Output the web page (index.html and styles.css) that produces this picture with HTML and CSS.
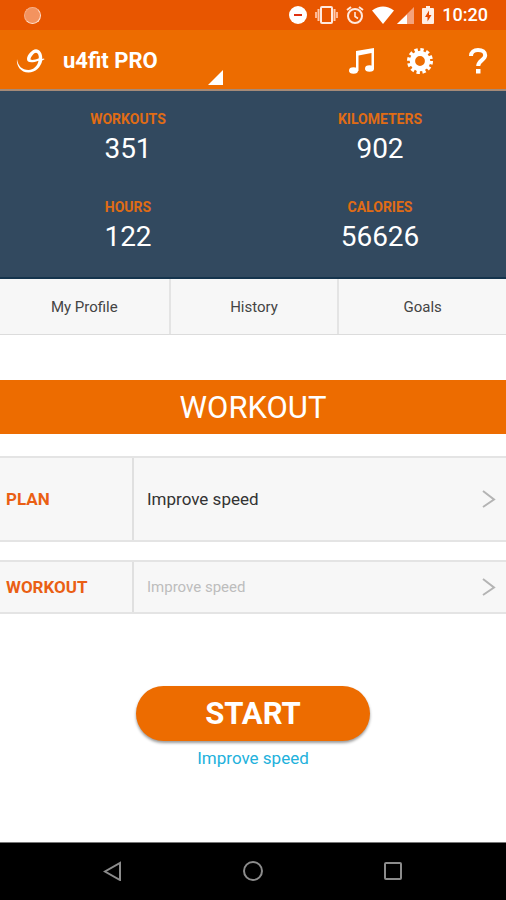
FILE: index.html
```html
<!DOCTYPE html>
<html lang="en">
<head>
<meta charset="utf-8">
<meta name="viewport" content="width=device-width, initial-scale=1">
<title>u4fit PRO</title>
<link rel="stylesheet" href="styles.css">
</head>
<body>
<div class="status">
  <span class="status-dot"></span>
  <div class="status-icons">
    <svg width="18" height="18" viewBox="0 0 18 18"><circle cx="9" cy="9" r="9" fill="#fff"/><path d="M5 9h8" stroke="#e03010" stroke-width="2"/></svg>
    <svg width="23" height="18" viewBox="0 0 23 18"><rect x="6" y="1" width="11" height="16" rx="1" fill="none" stroke="#ffe9df" stroke-width="2"/><path d="M3.500 3v12M19.500 3v12" stroke="#ffc9ae" stroke-width="2"/><path d="M1 6v6M22 6v6" stroke="#ffb794" stroke-width="2"/></svg>
    <svg width="18" height="18" viewBox="0 0 18 18"><g fill="none" stroke="#ffe9df" stroke-width="2"><circle cx="9" cy="10" r="7"/><path d="M9 6v4.500l3 2" stroke-width="1.600"/><path d="M1 4l4-3M17 4l-4-3"/></g></svg>
    <div class="signal">
      <svg width="22" height="18" viewBox="0 0 22 18"><path d="M0 4.500Q11-3.500 22 4.500L11 18z" fill="#fff"/></svg>
      <svg width="17" height="18" viewBox="0 0 17 18"><path d="M17 1v17H0z" fill="#f4a27c"/><path d="M10 8.500V18H0z" fill="#fff"/></svg>
    </div>
    <svg width="12" height="18" viewBox="0 0 12 18"><path d="M4 0h4v2h3q1 0 1 1v14q0 1-1 1H1q-1 0-1-1V3q0-1 1-1h3z" fill="#ffeee6"/><path d="M7 4.500L3 11h2.500v4.500L9.500 9H7z" fill="#e64a00"/></svg>
    <span class="clock">10:20</span>
  </div>
</div>

<header class="appbar">
  <svg class="logo" width="29" height="26" viewBox="0 0 29 26"><path d="M1 11C0 18 5 24.500 12.500 24.500 19.500 24.500 25 19 26.200 12.500L28.500 11.200 28 10.500 26.300 11C26.500 5 23.500 1.200 20 1.200 16 1.500 11 7 11 11 11 14.500 15 15.500 22.500 12.800 21.500 18 17.500 22 12.500 22 6 22 2 18 1 11zM14.500 11C15 8.500 18 4.800 20 4.800 22 5 23 7.500 22.800 10.300 19 12 14.500 12.500 14.500 11z" fill="#fff" fill-rule="evenodd"/></svg>
  <button class="switcher" type="button">u4fit PRO</button>
  <nav class="tools">
    <button type="button" aria-label="Music"><svg width="28" height="28" viewBox="0 0 28 28"><path d="M8 4L26 1V22h-2.500V6L10.500 8.500V24H8z" fill="#fff"/><ellipse cx="5.500" cy="23.500" rx="4.500" ry="3.300" fill="#fff"/><ellipse cx="21.500" cy="21.500" rx="4.500" ry="3.300" fill="#fff"/></svg></button>
    <button type="button" aria-label="Settings"><svg width="28" height="28" viewBox="0 0 28 28"><circle cx="14" cy="14" r="7.600" fill="none" stroke="#fff" stroke-width="5.400"/><circle cx="14" cy="14" r="11.200" fill="none" stroke="#fff" stroke-width="3.600" stroke-dasharray="3.320 2.544"/></svg></button>
    <button type="button" aria-label="Help"><svg width="28" height="28" viewBox="0 0 28 28"><path d="M7 9C7 5 10 3 14 3c4.500 0 7.200 2 7.200 5.300 0 4.700-7 5-7 10.700" fill="none" stroke="#fff" stroke-width="4"/><path d="M12 22h4.500v4.500H12z" fill="#fff"/></svg></button>
  </nav>
</header>

<main>
  <dl class="stats">
    <div><dt>WORKOUTS</dt><dd>351</dd></div>
    <div><dt>KILOMETERS</dt><dd>902</dd></div>
    <div><dt>HOURS</dt><dd>122</dd></div>
    <div><dt>CALORIES</dt><dd>56626</dd></div>
  </dl>
  <nav class="tabs">
    <a href="#profile">My Profile</a>
    <a href="#history">History</a>
    <a href="#goals">Goals</a>
  </nav>
  <h1 class="banner">WORKOUT</h1>
  <button class="row row-tall" type="button">
    <span class="row-label">PLAN</span>
    <span class="row-value">Improve speed</span>
    <svg class="chevron" width="14" height="20" viewBox="0 0 14 20"><path d="M1 2l11 8.500L1 18" fill="none" stroke="#b4b4b4" stroke-width="2"/></svg>
  </button>
  <button class="row row-dim" type="button">
    <span class="row-label">WORKOUT</span>
    <span class="row-value">Improve speed</span>
    <svg class="chevron" width="14" height="20" viewBox="0 0 14 20"><path d="M1 2l11 8.500L1 18" fill="none" stroke="#b4b4b4" stroke-width="2"/></svg>
  </button>
  <div class="start">
    <button class="start-button" type="button">START</button>
    <p>Improve speed</p>
  </div>
</main>

<nav class="system">
  <button type="button" aria-label="Back"><svg width="20" height="20" viewBox="0 0 20 20"><path d="M17 2v17L2 10.500z"/></svg></button>
  <button type="button" aria-label="Home"><svg width="20" height="20" viewBox="0 0 20 20"><circle cx="10" cy="10" r="9"/></svg></button>
  <button type="button" aria-label="Recent apps"><svg width="20" height="20" viewBox="0 0 20 20"><rect x="2" y="2" width="16" height="16" rx="1"/></svg></button>
</nav>
</body>
</html>
```
FILE: styles.css
```css
* {
  box-sizing: border-box;
}

body {
  margin: 0;
  min-height: 100vh;
  display: flex;
  flex-direction: column;
  background: #fff;
  color: #333;
  font-family: Roboto, "Liberation Sans", sans-serif;
}

button {
  border: 0;
  padding: 0;
  background: none;
  color: inherit;
  font: inherit;
  cursor: pointer;
}

svg {
  display: block;
}

.status {
  display: flex;
  align-items: center;
  justify-content: space-between;
  height: 30px;
  padding: 0 18px 0 24px;
  background: #e85600;
  color: #fff;
}

.status-dot {
  width: 17px;
  height: 17px;
  border-radius: 50%;
  background: #f3935f;
  border: 1px solid #f6ae88;
  border-right-color: #ffe0cf;
  border-bottom-color: #ffe0cf;
}

.status-icons {
  display: flex;
  align-items: center;
  gap: 8px;
}

.signal {
  display: flex;
  gap: 3px;
}

.clock {
  font-size: 18px;
  font-weight: 500;
  line-height: 20px;
}

.appbar {
  display: flex;
  align-items: center;
  height: 61px;
  padding: 2px 14px 0 16px;
  background: #ed6c00;
  border-bottom: 2px solid #a58a78;
  color: #fff;
}

.switcher {
  position: relative;
  width: 160px;
  height: 48px;
  margin-left: 18px;
  text-align: left;
  font-size: 22px;
  font-weight: 700;
}

.switcher::after {
  content: "";
  position: absolute;
  right: 0;
  bottom: 0;
  border-left: 15px solid transparent;
  border-bottom: 15px solid #fff;
}

.tools {
  display: flex;
  gap: 30px;
  margin-left: auto;
}

.stats {
  display: grid;
  grid-template-columns: 1fr 1fr;
  gap: 32px 0;
  margin: 0;
  padding: 20px 0 22px 2px;
  background: #32495f;
  border-bottom: 2px solid #15344d;
  text-align: center;
}

.stats dt {
  color: #e06c14;
  font-size: 14px;
  font-weight: 700;
  line-height: 16px;
}

.stats dd {
  margin: 4px 0 0;
  color: #fff;
  font-size: 28px;
  line-height: 36px;
}

.tabs {
  display: grid;
  grid-template-columns: repeat(3, 1fr);
  background: #f7f7f7;
  border-bottom: 1px solid #dcdcdc;
}

.tabs a {
  padding-top: 1px;
  color: #444;
  font-size: 15px;
  line-height: 54px;
  text-align: center;
  text-decoration: none;
}

.tabs a + a {
  border-left: 2px solid #e4e4e4;
}

.banner {
  margin: 45px 0 22px;
  padding-top: 1px;
  background: #ed6c00;
  color: #fff;
  font-size: 31px;
  font-weight: 400;
  line-height: 53px;
  text-align: center;
}

.row {
  display: flex;
  align-items: center;
  width: 100%;
  height: 54px;
  margin-bottom: 18px;
  padding-right: 10px;
  background: #f7f7f7;
  border: solid #e4e4e4;
  border-width: 2px 0;
  text-align: left;
}

.row-tall {
  height: 86px;
}

.row-label {
  display: flex;
  align-items: center;
  align-self: stretch;
  width: 134px;
  padding-left: 6px;
  border-right: 2px solid #e0e0e0;
  color: #ea5f14;
  font-size: 17px;
  font-weight: 700;
}

.row-value {
  flex: 1;
  padding-left: 13px;
  font-size: 17px;
}

.row-dim .row-value {
  color: #bdbdbd;
  font-size: 15px;
}

.start {
  display: flex;
  flex-direction: column;
  align-items: center;
  padding: 54px 0 24px;
}

.start-button {
  width: 234px;
  height: 55px;
  border-radius: 28px;
  background: #ed6c00;
  box-shadow: 0 2px 3px rgba(0, 0, 0, 0.4);
  color: #fff;
  font-size: 31px;
  font-weight: 700;
}

.start p {
  margin: 6px 0 0;
  color: #22b1dc;
  font-size: 17px;
  line-height: 22px;
}

.system {
  display: flex;
  justify-content: center;
  gap: 120px;
  margin-top: auto;
  padding: 18px 0 19px;
  background: #000;
  border-top: 1px solid #777;
}

.system svg {
  fill: none;
  stroke: #8c8c8c;
  stroke-width: 2;
}
```
